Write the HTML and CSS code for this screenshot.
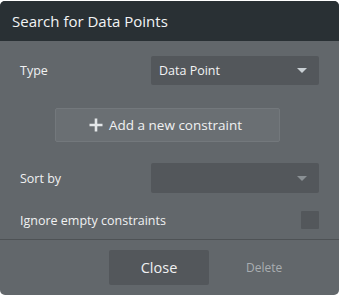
FILE: index.html
```html
<!DOCTYPE html>
<html lang="en">
<head>
  <meta charset="UTF-8" />
  <title>Search for Data Points</title>
  <link rel="stylesheet" href="styles.css">
</head>
<body>
  <div class="panel">
    <div class="panel-header">Search for Data Points</div>

    <div class="panel-body">
      <div class="field-row type-row">
        <span class="field-label">Type</span>
        <div class="dropdown">
          <span class="dropdown-value">Data Point</span>
          <span class="caret"></span>
        </div>
      </div>

      <button class="add-button">
        <svg class="plus" width="14" height="14" viewBox="0 0 14 14">
          <path d="M7 0.5V13.5M0.5 7H13.5" stroke="#e4e7e9" stroke-width="2.6" fill="none"/>
        </svg>
        Add a new constraint
      </button>

      <div class="field-row sort-row">
        <span class="field-label">Sort by</span>
        <div class="dropdown empty">
          <span class="dropdown-value"></span>
          <span class="caret dim"></span>
        </div>
      </div>

      <div class="field-row check-row">
        <span class="field-label">Ignore empty constraints</span>
        <div class="checkbox"></div>
      </div>
    </div>

    <div class="panel-footer">
      <button class="close-button">Close</button>
      <span class="delete-link">Delete</span>
    </div>
  </div>
</body>
</html>
```

FILE: styles.css
```css
body {
  margin: 0;
  background: #ffffff;
  font-family: 'Open Sans', 'Noto Sans', sans-serif;
}

.panel {
  margin-top: 1px;
  width: 339px;
  height: 294px;
  background: #62676b;
  border-radius: 5px;
  overflow: hidden;
  display: flex;
  flex-direction: column;
}

.panel-header {
  height: 40px;
  line-height: 40px;
  padding-left: 12px;
  background: #293034;
  color: #f2f4f5;
  font-size: 15px;
}

.panel-body {
  padding: 15px 20px 0 20px;
  display: flex;
  flex-direction: column;
}

.field-row {
  display: flex;
  align-items: center;
  justify-content: space-between;
}

.field-label {
  color: #f0f1f2;
  font-size: 12.5px;
}

.dropdown {
  width: 168px;
  height: 29px;
  background: #53575b;
  border-radius: 2px;
  display: flex;
  align-items: center;
  justify-content: space-between;
  padding: 0 12px 0 8px;
  box-sizing: border-box;
}

.dropdown.empty {
  height: 30px;
}

.dropdown-value {
  color: #f2f3f4;
  font-size: 12.5px;
}

.caret {
  width: 0;
  height: 0;
  border-left: 5px solid transparent;
  border-right: 5px solid transparent;
  border-top: 5px solid #c9d0d4;
}

.caret.dim {
  border-top-color: #8a9094;
}

.add-button {
  margin: 23px 0 0 35px;
  width: 225px;
  height: 34px;
  background: #6a6f73;
  border: 1px solid #73787c;
  border-radius: 2px;
  color: #f0f1f2;
  font-family: inherit;
  font-size: 13.5px;
  display: flex;
  align-items: center;
  justify-content: center;
  gap: 6px;
  padding: 0 4px 0 0;
}

.plus {
  flex: none;
}

.sort-row {
  margin-top: 21px;
}

.check-row {
  margin-top: 18px;
}

.checkbox {
  width: 18px;
  height: 18px;
  background: #53575b;
  border-radius: 1px;
}

.panel-footer {
  margin-top: 10px;
  border-top: 1px solid #4e5255;
  padding: 10px 0 0 109px;
  display: flex;
  align-items: center;
}

.close-button {
  width: 100px;
  height: 35px;
  background: #53575b;
  border: none;
  border-radius: 2px;
  color: #f0f1f2;
  font-family: inherit;
  font-size: 14.5px;
  padding: 0;
}

.delete-link {
  margin-left: 37px;
  color: #a9aeb1;
  font-size: 12px;
}
```
